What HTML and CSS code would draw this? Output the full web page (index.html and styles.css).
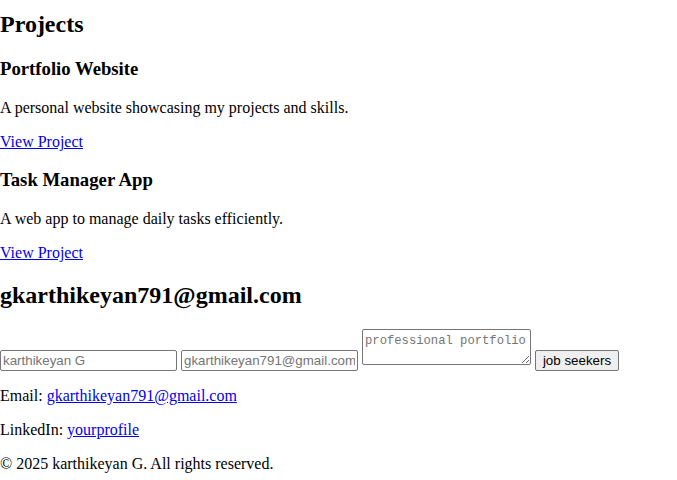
FILE: index.html
```html
<!DOCTYPE html>
<html lang="en">
<head>
<meta charset="utf-8">
<title>Portfolio</title>
<link rel="stylesheet" href="styles.css">
</head>
<body>
<section class="projects">
  <h2 class="first">Projects</h2>
  <div class="project">
    <h3>Portfolio Website</h3>
    <p>A personal website showcasing my projects and skills.</p>
    <p><a href="#">View Project</a></p>
  </div>
  <div class="project">
    <h3>Task Manager App</h3>
    <p>A web app to manage daily tasks efficiently.</p>
    <p><a href="#">View Project</a></p>
  </div>
</section>
<section class="contact">
  <h2>gkarthikeyan791@gmail.com</h2>
  <form class="contact-form">
    <input class="field" type="text" placeholder="karthikeyan G">
    <input class="field" type="email" placeholder="gkarthikeyan791@gmail.com">
    <textarea class="message" placeholder="professional portfolio"></textarea>
    <button class="send" type="button">job seekers</button>
  </form>
  <p>Email: <a href="#">gkarthikeyan791@gmail.com</a></p>
  <p>LinkedIn: <a href="#">yourprofile</a></p>
</section>
<footer>
  <p>&copy; 2025 karthikeyan G. All rights reserved.</p>
</footer>
</body>
</html>
```
FILE: styles.css
```css
html, body {
  margin: 0;
  padding: 0;
  background: #fff;
}
body {
  font-family: "Liberation Serif", "Times New Roman", serif;
  font-size: 16px;
  color: #000;
}
h2 {
  font-size: 24px;
  margin: 19.92px 0;
}
h2.first {
  margin-top: 11px;
}
h3 {
  font-size: 18.72px;
  margin: 18.72px 0;
}
p {
  margin: 16px 0;
}
a {
  color: #0000ee;
}
.contact-form {
  margin: 0;
}
.field {
  box-sizing: border-box;
  width: 177px;
  height: 21px;
  font-family: "Liberation Sans", Arial, sans-serif;
  font-size: 13.33px;
  border: 1px solid #767676;
  border-radius: 2px;
  padding: 1px 2px;
  margin: 0;
}
.field::placeholder, .message::placeholder {
  color: #757575;
}
.message {
  box-sizing: border-box;
  width: 169px;
  height: 36px;
  font-family: "Liberation Mono", "Courier New", monospace;
  font-size: 12.2px;
  border: 1px solid #767676;
  border-radius: 2px;
  padding: 4px 2px 2px;
  margin: 0;
}
.send {
  box-sizing: border-box;
  height: 21px;
  width: 84px;
  font-family: "Liberation Sans", Arial, sans-serif;
  font-size: 13.33px;
  color: #000;
  background: #efefef;
  border: 1px solid #767676;
  border-radius: 2px;
  padding: 1px 6px;
  margin: 0;
}
```
